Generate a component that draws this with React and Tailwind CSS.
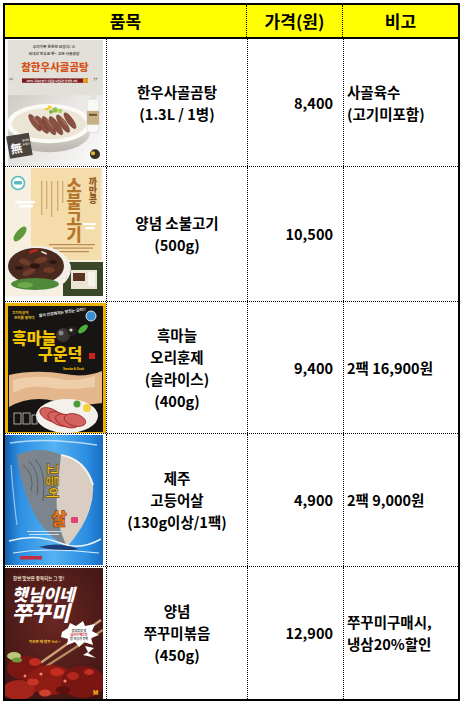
import React from "react"

const svgFont = "'Noto Sans CJK KR', sans-serif"

function GomtangImg() {
    return (
        <svg width="98" height="126" viewBox="0 0 98 128" preserveAspectRatio="none" fontFamily={svgFont}>
            <defs>
                <linearGradient id="gtBg" x1="0" y1="0" x2="1" y2="1">
                    <stop offset="0" stopColor="#bdb8b2" />
                    <stop offset="0.6" stopColor="#e9e7e4" />
                    <stop offset="1" stopColor="#fbfbfa" />
                </linearGradient>
                <linearGradient id="gtBowl" x1="0" y1="0" x2="0" y2="1">
                    <stop offset="0" stopColor="#f4f2ee" />
                    <stop offset="1" stopColor="#b9b4ad" />
                </linearGradient>
            </defs>
            <rect width="98" height="128" fill="url(#gtBg)" />
            <rect x="0" y="0" width="98" height="56" fill="#e3dfd9" />
            <rect x="0" y="0" width="3" height="128" fill="#f6f6f6" />
            <text x="49" y="8" fontSize="3.8" fill="#5a5550" textAnchor="middle">우리가족 든든한 보양식! ♨</text>
            <text x="49" y="15" fontSize="3.8" fill="#5a5550" textAnchor="middle">국내산 한우로 푹~ 고은 사골곰탕</text>
            <text x="50" y="31" fontSize="10.5" fontWeight="900" fill="#d3531b" textAnchor="middle">참한우사골곰탕</text>
            <text x="4" y="45" fontSize="8" fill="#8a8580">“</text>
            <text x="88" y="45" fontSize="8" fill="#8a8580">”</text>
            <rect x="17" y="39" width="66" height="4.5" fill="#7b1c1c" />
            <rect x="78" y="39" width="5" height="4.5" fill="#e8a020" />
            <text x="47" y="42.4" fontSize="2.6" fill="#fff" textAnchor="middle">100% 국내산 한우 사골을 오랫동안 정성껏 고아</text>
            <ellipse cx="44" cy="94" rx="41" ry="20" fill="url(#gtBowl)" />
            <ellipse cx="44" cy="85" rx="42" ry="20" fill="#fbfaf7" />
            <ellipse cx="44" cy="85" rx="37" ry="16" fill="#ece5d5" />
            <g fill="#8a5142" stroke="#5a2d24" strokeWidth="0.5">
                <ellipse cx="30" cy="84" rx="3.2" ry="10" transform="rotate(-35 30 84)" />
                <ellipse cx="37" cy="86" rx="3.2" ry="10.5" transform="rotate(-35 37 86)" />
                <ellipse cx="44" cy="87" rx="3.2" ry="11" transform="rotate(-35 44 87)" />
                <ellipse cx="51" cy="87" rx="3.2" ry="11" transform="rotate(-35 51 87)" />
                <ellipse cx="58" cy="85" rx="3.2" ry="10.5" transform="rotate(-35 58 85)" />
                <ellipse cx="65" cy="82" rx="3" ry="9.5" transform="rotate(-35 65 82)" />
            </g>
            <g fill="#b9786a" opacity="0.7">
                <ellipse cx="31" cy="82" rx="1" ry="6" transform="rotate(-35 31 82)" />
                <ellipse cx="45" cy="85" rx="1" ry="7" transform="rotate(-35 45 85)" />
                <ellipse cx="59" cy="83" rx="1" ry="6" transform="rotate(-35 59 83)" />
            </g>
            <circle cx="50" cy="71" r="2.6" fill="#8ec04a" />
            <circle cx="55" cy="72" r="2.2" fill="#a6cf5a" />
            <circle cx="46" cy="73" r="2" fill="#7bb03e" />
            <rect x="40" y="69" width="5" height="2" fill="#f2c41b" transform="rotate(-20 42 70)" />
            <rect x="43" y="67" width="4" height="2" fill="#f5d02a" transform="rotate(30 45 68)" />
            <rect x="85" y="54" width="6" height="7" rx="1" fill="#e4e2de" />
            <rect x="82" y="60" width="12" height="34" rx="3" fill="#f8f8f6" stroke="#d6d3ce" strokeWidth="0.6" />
            <rect x="82" y="72" width="12" height="14" fill="#c6b186" />
            <rect x="84" y="75" width="8" height="2" fill="#6b5530" />
            <g transform="rotate(-10 14 108)">
                <rect x="3" y="96" width="23" height="23" fill="#4b433d" />
                <text x="11" y="114" fontSize="12" fill="#fff" textAnchor="middle">無</text>
                <text x="21.5" y="104" fontSize="2.6" fill="#e8e2da" textAnchor="middle">항생제</text>
                <text x="21.5" y="108" fontSize="2.6" fill="#e8e2da" textAnchor="middle">무첨가</text>
            </g>
            <circle cx="90" cy="116" r="5" fill="#3a3020" />
            <circle cx="88" cy="115" r="2" fill="#e8c020" />
        </svg>
    )
}

function BulgogiImg() {
    return (
        <svg width="98" height="132" viewBox="0 0 98 132" fontFamily={svgFont}>
            <rect width="98" height="132" fill="#f7efdf" />
            <rect x="26" y="0" width="70" height="92" fill="#f5dcab" />
            <circle cx="13" cy="15" r="6.5" fill="#fff" stroke="#58bcc0" strokeWidth="1.6" />
            <rect x="9" y="13" width="8" height="3.5" rx="1" fill="#58bcc0" />
            <g fill="#c39a62" opacity="0.75">
                <rect x="36" y="13" width="1.3" height="34" />
                <rect x="41" y="13" width="1.3" height="28" />
                <rect x="46" y="13" width="1.3" height="36" />
                <rect x="52" y="13" width="1.3" height="30" />
                <rect x="57" y="13" width="1.3" height="22" />
            </g>
            <text x="69" y="9" fontSize="16.5" fontWeight="900" fill="#b5772c" style={{ writingMode: "vertical-rl" }}>소불고기</text>
            <text x="88" y="9" fontSize="9" fontWeight="900" fill="#8b5a22" style={{ writingMode: "vertical-rl" }}>까만콩</text>
            <rect x="10" y="33" width="20" height="2.4" rx="1.2" fill="#fff" />
            <rect x="14" y="37" width="14" height="2.4" rx="1.2" fill="#fff" />
            <rect x="78" y="55" width="13" height="2.2" rx="1.1" fill="#fff" />
            <rect x="80" y="59" width="10" height="2.2" rx="1.1" fill="#fff" />
            <ellipse cx="15" cy="66" rx="9" ry="4" fill="#5e9a3a" transform="rotate(-50 15 66)" />
            <g fill="#a8783e" opacity="0.8">
                <rect x="44" y="76" width="46" height="1.2" />
                <rect x="48" y="79.5" width="40" height="1.2" />
                <rect x="52" y="83" width="32" height="1.2" />
            </g>
            <rect x="58" y="94" width="40" height="34" fill="#3a4628" />
            <rect x="66" y="102" width="26" height="19" fill="#ebe5d6" />
            <rect x="68" y="105" width="12" height="8" fill="#5a3322" />
            <rect x="83" y="104" width="7" height="14" fill="#f7f3ea" />
            <ellipse cx="33" cy="101" rx="33" ry="23" fill="#f1efe8" />
            <ellipse cx="31" cy="98" rx="28" ry="18" fill="#4a2a1e" />
            <g fill="#6e3c28">
                <ellipse cx="20" cy="94" rx="6" ry="3" transform="rotate(20 20 94)" />
                <ellipse cx="36" cy="92" rx="7" ry="3" transform="rotate(-15 36 92)" />
                <ellipse cx="44" cy="102" rx="6" ry="3" />
                <ellipse cx="24" cy="104" rx="7" ry="3" transform="rotate(-25 24 104)" />
            </g>
            <g fill="#2c1710">
                <ellipse cx="30" cy="98" rx="5" ry="2.5" />
                <ellipse cx="14" cy="100" rx="4" ry="2" />
                <ellipse cx="48" cy="94" rx="4" ry="2" />
            </g>
            <rect x="24" y="82" width="9" height="2.4" rx="1" fill="#c8241e" transform="rotate(-20 28 83)" />
            <rect x="36" y="84" width="6" height="1.6" fill="#e8dcc8" transform="rotate(25 39 85)" />
            <ellipse cx="30" cy="116" rx="24" ry="6" fill="#4f8a3a" />
            <ellipse cx="20" cy="117" rx="8" ry="3" fill="#6fa84a" />
            <rect x="0" y="128" width="98" height="4" fill="#fbfbf8" />
        </svg>
    )
}

function DuckImg() {
    return (
        <svg width="101" height="132" viewBox="0 0 101 132" fontFamily={svgFont}>
            <rect width="101" height="132" fill="#f0b200" />
            <rect x="3" y="3" width="95" height="126" fill="#171513" />
            <text x="7" y="11" fontSize="3.6" fill="#f3c623">고기이상의</text>
            <text x="9" y="16" fontSize="3.6" fill="#f3c623">오리를 말하다</text>
            <text x="34" y="14" fontSize="3.8" fill="#f2f2f2" transform="rotate(-8 34 14)">몸이 건강해지는 맛있는 오리!!</text>
            <circle cx="86" cy="13" r="5" fill="#3a8fd0" stroke="#fff" strokeWidth="0.8" />
            <text x="7" y="41" fontSize="16" fontWeight="900" fill="#f5c400">흑마늘</text>
            <circle cx="58" cy="32" r="7" fill="#3b3532" />
            <circle cx="56" cy="30" r="2.5" fill="#8b8480" />
            <circle cx="67" cy="28" r="5" fill="#272220" />
            <circle cx="66" cy="27" r="1.6" fill="#d8d2c8" />
            <ellipse cx="78" cy="26" rx="6" ry="2.8" fill="#4caf3a" transform="rotate(-40 78 26)" />
            <text x="33" y="57" fontSize="16" fontWeight="900" fill="#f5c400">구운덕</text>
            <rect x="84" y="50" width="6" height="6" fill="#d02020" />
            <text x="58" y="67" fontSize="3" fill="#f5c400">Smoke &amp; Duck</text>
            <path d="M4 72 Q30 66 60 71 Q80 75 97 68 L97 100 Q70 104 50 98 Q25 92 4 104 Z" fill="#e4b68b" />
            <path d="M8 77 Q30 71 56 76 Q70 79 90 73 L90 84 Q60 88 40 84 Q22 82 8 90 Z" fill="#f1d5b4" opacity="0.8" />
            <ellipse cx="62" cy="113" rx="31" ry="17" fill="#f4f0ec" />
            <g fill="#d4625f" stroke="#9a2626" strokeWidth="0.8">
                <ellipse cx="46" cy="112" rx="12" ry="6" transform="rotate(25 46 112)" />
                <ellipse cx="54" cy="116" rx="12" ry="6" transform="rotate(25 54 116)" />
                <ellipse cx="62" cy="118" rx="12" ry="6" transform="rotate(20 62 118)" />
                <ellipse cx="70" cy="117" rx="11" ry="6" transform="rotate(15 70 117)" />
            </g>
            <circle cx="72" cy="101" r="3.5" fill="#4c9a34" />
            <circle cx="82" cy="105" r="4" fill="#f3d23a" />
            <g fill="none" stroke="#e6e6e6" strokeWidth="0.7">
                <rect x="9" y="110" width="7" height="11" />
                <rect x="18" y="110" width="7" height="11" />
                <rect x="27" y="112" width="5" height="9" />
            </g>
        </svg>
    )
}

function MackerelImg() {
    return (
        <svg width="98" height="130" viewBox="0 0 98 130" fontFamily={svgFont}>
            <defs>
                <linearGradient id="mkBg" x1="0" y1="0" x2="1" y2="0">
                    <stop offset="0" stopColor="#155fae" />
                    <stop offset="0.15" stopColor="#2d8fe2" />
                    <stop offset="0.5" stopColor="#56b2f2" />
                    <stop offset="0.85" stopColor="#2a8be0" />
                    <stop offset="1" stopColor="#1a6cc0" />
                </linearGradient>
            </defs>
            <rect width="98" height="130" fill="url(#mkBg)" />
            <path d="M5 8 Q40 2 92 10" stroke="#cfeaff" strokeWidth="1.4" fill="none" opacity="0.8" />
            <path d="M6 30 Q8 60 12 90" stroke="#bfe4ff" strokeWidth="1.2" fill="none" opacity="0.7" />
            <path d="M12 20 Q35 10 56 20 L52 60 Q50 86 62 112 Q40 100 28 76 Q15 50 12 20 Z" fill="#7c848d" />
            <g stroke="#4e5660" strokeWidth="0.8" fill="none">
                <path d="M18 30 Q30 40 26 56" />
                <path d="M24 26 Q36 38 32 60" />
                <path d="M30 24 Q42 36 38 66" />
            </g>
            <path d="M56 20 Q80 24 88 50 Q90 80 62 112 Q50 86 52 60 Z" fill="#d9cec1" />
            <path d="M56 20 Q80 24 88 50" stroke="#f4f1ec" strokeWidth="2" fill="none" />
            <text transform="translate(43 28) rotate(90)" fontSize="13" fontWeight="900" fill="#f4c21c" stroke="#4a2e00" strokeWidth="0.5">고등어</text>
            <text x="54" y="90" fontSize="17" fontWeight="900" fill="#f07a1a" stroke="#7a2a00" strokeWidth="0.5" textAnchor="middle">살</text>
            <rect x="66" y="82" width="7" height="6" rx="1" fill="#e0407a" />
            <g fill="#e6f4ff" opacity="0.8">
                <rect x="22" y="96" width="34" height="1" />
                <rect x="24" y="99" width="30" height="1" />
            </g>
            <path d="M4 106 Q30 98 55 108 Q75 116 96 104" stroke="#ffffff" strokeWidth="1.5" fill="none" opacity="0.9" />
            <path d="M34 112 Q52 106 74 114 Q56 118 34 112 Z" fill="#1d3f78" />
            <path d="M8 118 Q40 112 94 118" stroke="#d6efff" strokeWidth="1" fill="none" />
            <rect x="15" y="121" width="22" height="3.5" fill="#c03040" />
        </svg>
    )
}

function JjukkumiImg() {
    return (
        <svg width="98" height="131" viewBox="0 0 98 131" fontFamily={svgFont}>
            <defs>
                <radialGradient id="jkBg" cx="0.5" cy="0.4" r="0.7">
                    <stop offset="0" stopColor="#6a2622" />
                    <stop offset="1" stopColor="#3f1614" />
                </radialGradient>
            </defs>
            <rect width="98" height="131" fill="url(#jkBg)" />
            <text x="8" y="12" fontSize="4.5" fill="#f0e0d0">한번 맛보면 중독되는 그 맛!</text>
            <text fontWeight="900" fill="#fff" fontStyle="italic">
                <tspan x="7" y="33" fontSize="17">햇님이네</tspan>
                <tspan x="7" y="53" fontSize="21">쭈꾸미</tspan>
            </text>
            <text x="24" y="75" fontSize="3.6" fill="#f0c030">먹으면 왜 맵쭈 소스 ~</text>
            <line x1="34" y1="96" x2="96" y2="52" stroke="#c9a27a" strokeWidth="2.4" />
            <line x1="40" y1="99" x2="98" y2="62" stroke="#b58e66" strokeWidth="2.2" />
            <polygon points="57,64 63,60 65,55 71,58 78,53 80,58 90,56 87,63 94,67 86,70 88,77 79,74 74,79 70,74 62,77 63,71 56,69" fill="#fff" />
            <text x="74" y="64" fontSize="3" fill="#333" textAnchor="middle">쫄깃쫄깃 맛</text>
            <text x="74" y="68" fontSize="3" fill="#c8241e" textAnchor="middle">화끈한 매운맛</text>
            <text x="74" y="72" fontSize="3" fill="#333" textAnchor="middle">밥 한공기 뚝딱</text>
            <polygon points="80,78 89,80 83,85 91,90 78,87 83,84" fill="#fff" />
            <g>
                <ellipse cx="20" cy="100" rx="18" ry="12" fill="#7a1712" />
                <ellipse cx="46" cy="112" rx="24" ry="15" fill="#8e1c15" />
                <ellipse cx="78" cy="114" rx="22" ry="16" fill="#7a1612" />
                <ellipse cx="14" cy="122" rx="16" ry="10" fill="#a3241a" />
                <ellipse cx="30" cy="94" rx="6" ry="4" fill="#c02c20" />
                <ellipse cx="52" cy="104" rx="7" ry="4" fill="#c42e22" />
                <ellipse cx="68" cy="108" rx="6" ry="4" fill="#b3281c" />
                <ellipse cx="28" cy="114" rx="6" ry="3.5" fill="#c73324" />
                <ellipse cx="84" cy="104" rx="5" ry="3" fill="#c03024" />
                <ellipse cx="58" cy="122" rx="7" ry="4" fill="#5a0f0b" />
                <ellipse cx="40" cy="125" rx="6" ry="3.5" fill="#d0402e" />
                <circle cx="36" cy="106" r="1.6" fill="#f28a6a" />
                <circle cx="60" cy="113" r="1.6" fill="#f28a6a" />
                <circle cx="20" cy="108" r="1.4" fill="#f28a6a" />
            </g>
            <ellipse cx="9" cy="88" rx="7" ry="4" fill="#b9c87a" />
            <ellipse cx="12" cy="92" rx="5" ry="2.5" fill="#6f9a3e" />
            <text x="88" y="127" fontSize="6" fontWeight="900" fill="#f0c020">M</text>
        </svg>
    )
}

const rows = [
    { h: "h-[128px]", img: <GomtangImg />, name: ["한우사골곰탕", "(1.3L / 1병)"], price: "8,400", note: ["사골육수", "(고기미포함)"] },
    { h: "h-[135px]", img: <BulgogiImg />, name: ["양념 소불고기", "(500g)"], price: "10,500", note: [] },
    { h: "h-[132px]", img: <DuckImg />, name: ["흑마늘", "오리훈제", "(슬라이스)", "(400g)"], price: "9,400", note: ["2팩 16,900원"] },
    { h: "h-[133px]", img: <MackerelImg />, name: ["제주", "고등어살", "(130g이상/1팩)"], price: "4,900", note: ["2팩 9,000원"] },
    { h: "h-[132px]", img: <JjukkumiImg />, name: ["양념", "쭈꾸미볶음", "(450g)"], price: "12,900", note: ["쭈꾸미구매시,", "냉삼20%할인"] },
]

export default function App() {
    return (
        <div className="bg-white w-[463px] h-[704px] p-[3px] font-['Noto_Sans_CJK_KR',sans-serif] text-black">
            <div className="w-[457px] border-2 border-black">
                {/* header */}
                <div className="flex h-[34px] bg-[#ffff00] border-b-2 border-black text-[17px] font-bold">
                    <div className="w-[242px] border-r border-dotted border-black flex items-center justify-center">품목</div>
                    <div className="w-[96px] border-r border-dotted border-black flex items-center justify-center">가격(원)</div>
                    <div className="flex-1 flex items-center justify-center">비고</div>
                </div>
                {rows.map((r, i) => (
                    <div key={i} className={`flex ${r.h} ${i < rows.length - 1 ? "border-b border-dotted border-black" : ""} text-[14.5px] font-bold leading-[22px]`}>
                        <div className="w-[102px] border-r border-dotted border-black flex items-start pt-[1px] overflow-hidden">
                            {r.img}
                        </div>
                        <div className="w-[141px] border-r border-dotted border-black flex flex-col items-center justify-center text-center">
                            {r.name.map((t, j) => <div key={j}>{t}</div>)}
                        </div>
                        <div className="w-[96px] border-r border-dotted border-black flex items-center justify-end pr-[10px]">
                            {r.price}
                        </div>
                        <div className="flex-1 flex flex-col justify-center pl-[3px]">
                            {r.note.map((t, j) => <div key={j}>{t}</div>)}
                        </div>
                    </div>
                ))}
            </div>
        </div>
    )
}
